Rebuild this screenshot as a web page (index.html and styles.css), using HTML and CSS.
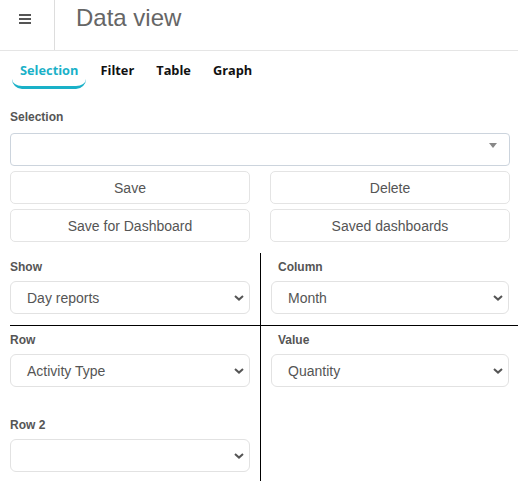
FILE: index.html
```html
<!DOCTYPE html>
<html lang="en">
<head>
    <meta charset="UTF-8">
    <meta name="viewport" content="width=device-width, initial-scale=1.0">
    <title>Data view</title>
    <link rel="stylesheet" href="styles.css">
</head>
<body>
    <header class="topbar">
        <div class="menu-btn">
            <span></span>
            <span></span>
            <span></span>
        </div>
        <h1 class="page-title">Data view</h1>
    </header>

    <nav class="tabs">
        <a class="tab active">Selection</a>
        <a class="tab">Filter</a>
        <a class="tab">Table</a>
        <a class="tab">Graph</a>
    </nav>

    <main class="content">
        <label class="field-label">Selection</label>
        <div class="combo">
            <span class="combo-arrow"></span>
        </div>

        <div class="btn-grid">
            <button>Save</button>
            <button>Delete</button>
            <button>Save for Dashboard</button>
            <button>Saved dashboards</button>
        </div>

        <div class="pivot">
            <div class="pivot-row divided">
                <div class="cell cell-left">
                    <label class="field-label">Show</label>
                    <div class="dropdown">
                        <span>Day reports</span>
                        <svg class="chevron" width="10" height="6" viewBox="0 0 10 6"><path d="M1 1l4 3.6L9 1" fill="none" stroke="#555" stroke-width="2"/></svg>
                    </div>
                </div>
                <div class="cell cell-right">
                    <label class="field-label">Column</label>
                    <div class="dropdown">
                        <span>Month</span>
                        <svg class="chevron" width="10" height="6" viewBox="0 0 10 6"><path d="M1 1l4 3.6L9 1" fill="none" stroke="#555" stroke-width="2"/></svg>
                    </div>
                </div>
            </div>
            <div class="pivot-row">
                <div class="cell cell-left">
                    <label class="field-label">Row</label>
                    <div class="dropdown">
                        <span>Activity Type</span>
                        <svg class="chevron" width="10" height="6" viewBox="0 0 10 6"><path d="M1 1l4 3.6L9 1" fill="none" stroke="#555" stroke-width="2"/></svg>
                    </div>
                </div>
                <div class="cell cell-right">
                    <label class="field-label">Value</label>
                    <div class="dropdown">
                        <span>Quantity</span>
                        <svg class="chevron" width="10" height="6" viewBox="0 0 10 6"><path d="M1 1l4 3.6L9 1" fill="none" stroke="#555" stroke-width="2"/></svg>
                    </div>
                </div>
            </div>
            <div class="pivot-row last">
                <div class="cell cell-left">
                    <label class="field-label">Row 2</label>
                    <div class="dropdown">
                        <span></span>
                        <svg class="chevron" width="10" height="6" viewBox="0 0 10 6"><path d="M1 1l4 3.6L9 1" fill="none" stroke="#555" stroke-width="2"/></svg>
                    </div>
                </div>
                <div class="cell cell-right"></div>
            </div>
        </div>
    </main>
</body>
</html>
```

FILE: styles.css
```css
* {
    margin: 0;
    padding: 0;
    box-sizing: border-box;
}

body {
    background: white;
    font-family: 'Liberation Sans', Arial, sans-serif;
    color: #555;
    width: 518px;
}

/* header */
.topbar {
    display: flex;
    height: 51px;
    border-bottom: 1px solid #e5e5e5;
}

.menu-btn {
    width: 55px;
    height: 50px;
    border-right: 1px solid #ddd;
    padding: 14px 0 0 19px;
    display: flex;
    flex-direction: column;
    gap: 2px;
}

.menu-btn span {
    display: block;
    width: 12px;
    height: 2px;
    background-color: #555;
}

.page-title {
    font-size: 24px;
    font-weight: normal;
    line-height: 28px;
    color: #666;
    padding: 4px 0 0 21px;
}

/* tabs */
.tabs {
    display: flex;
    gap: 6px;
    padding-left: 12px;
    margin-top: 4px;
}

.tab {
    font-family: 'Open Sans', sans-serif;
    font-size: 12.8px;
    font-weight: 700;
    line-height: 18px;
    color: #111;
    padding: 6px 8px 7px;
    border-bottom: 3px solid transparent;
    border-radius: 10px;
    cursor: pointer;
}

.tab.active {
    color: #1ab1c8;
    border-bottom-color: #1ab1c8;
}

/* content */
.content {
    padding: 20px 8px 0 10px;
}

.field-label {
    display: block;
    font-size: 12px;
    font-weight: bold;
    line-height: 17px;
    color: #555;
    margin-bottom: 7px;
}

.combo {
    position: relative;
    height: 33px;
    border: 1px solid #ccd4dd;
    border-radius: 4px;
}

.combo-arrow {
    position: absolute;
    top: 9px;
    right: 12px;
    border-style: solid;
    border-width: 5px 4px 0 4px;
    border-color: #888 transparent transparent transparent;
}

.btn-grid {
    display: grid;
    grid-template-columns: 1fr 1fr;
    gap: 5px 20px;
    margin-top: 5px;
}

.btn-grid button {
    height: 33px;
    background: white;
    border: 1px solid #e4e4e4;
    border-radius: 5px;
    font-family: 'Liberation Sans', Arial, sans-serif;
    font-size: 14px;
    color: #555;
    cursor: pointer;
}

/* pivot settings */
.pivot {
    margin-top: 11px;
    margin-right: -8px;
}

.pivot-row {
    display: grid;
    grid-template-columns: 251px 1fr;
}

.pivot-row.divided {
    border-bottom: 1px solid #000;
}

.cell {
    padding-top: 6px;
    padding-bottom: 11px;
}

.pivot-row.last .cell {
    padding-top: 19px;
    padding-bottom: 9px;
}

.cell-left {
    padding-right: 10px;
    border-right: 1px solid #000;
}

.cell-right {
    padding-left: 10px;
    padding-right: 9px;
}

.cell .field-label {
    margin-bottom: 5px;
}

.cell-right .field-label {
    padding-left: 7px;
}

.dropdown {
    display: flex;
    justify-content: space-between;
    align-items: center;
    height: 33px;
    border: 1px solid #e2e2e2;
    border-radius: 6px;
    padding: 0 5px 0 16px;
    font-size: 14px;
    color: #555;
}
```
